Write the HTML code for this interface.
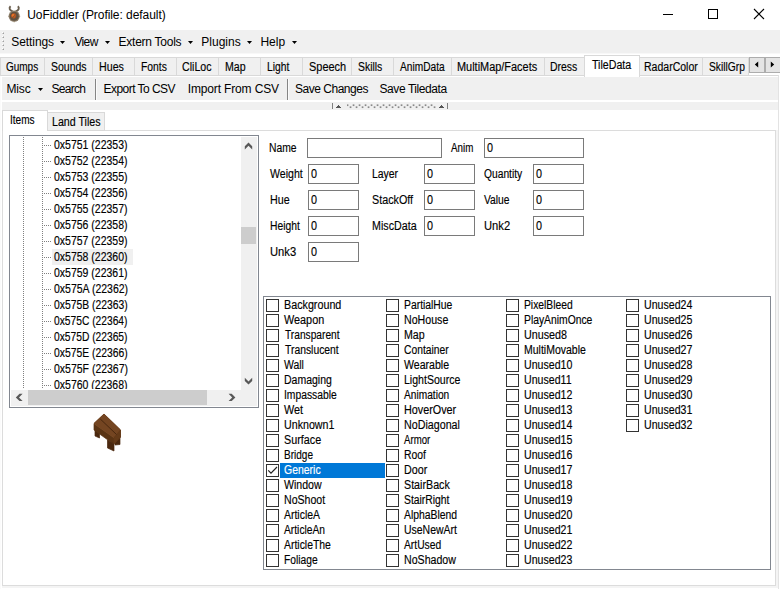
<!DOCTYPE html>
<html><head><meta charset="utf-8"><title>UoFiddler</title>
<style>
html,body{margin:0;padding:0;background:#fff;width:780px;height:589px;overflow:hidden;}
body{font-family:"Liberation Sans",sans-serif;color:#000;}
#w{left:0;top:0;width:780px;height:589px;overflow:hidden;}
div,span,svg{position:absolute;}
span{white-space:nowrap;}
.ms{font-size:12px;transform-origin:0 50%;-webkit-text-stroke:0.15px currentColor;}
.seg{font-size:12px;}
.tabt{text-align:center;}
</style></head><body><div id="w">
<svg style="left:0;top:0" width="30" height="30" viewBox="0 0 30 30">
<path d="M10.6 6.3 C8.7 8.0 9.4 10.3 13.0 11.6 M17.8 6.3 C19.7 8.0 19.0 10.3 15.4 11.6" fill="none" stroke="#6a5f4f" stroke-width="1.9"/>
<circle cx="14.2" cy="16.2" r="5.6" fill="#8b7c68"/>
<circle cx="14.2" cy="16.2" r="4.5" fill="#5e5141"/>
<circle cx="13.7" cy="15.8" r="2.6" fill="#b8541e"/>
<circle cx="13.2" cy="15.4" r="1.4" fill="#ea7426"/>
<path d="M12.2 18.2 L15.2 14.4 M15.8 17.8 L16.6 15.2" stroke="#5e5141" stroke-width="0.7"/>
<path d="M14.2 21 L14.2 22.3" stroke="#9a8a70" stroke-width="1.1"/>
<path d="M8.4 16.3 H9.2 M19.3 16.3 H20.2" stroke="#a09078" stroke-width="0.9"/>
</svg>
<span class="seg" style="left:27.2px;top:6.0px;height:18px;line-height:18px;letter-spacing:-0.059px;">UoFiddler (Profile: default)</span>
<svg style="left:655px;top:0" width="125" height="30" viewBox="0 0 125 30"><path d="M8 14.5 H18" stroke="#000" stroke-width="1"/><rect x="53.5" y="9.5" width="9" height="9" fill="none" stroke="#000" stroke-width="1"/><path d="M99 9 L109 19 M109 9 L99 19" stroke="#000" stroke-width="1.1"/></svg>
<div style="left:0px;top:30px;width:780px;height:23px;background:#f0f0f0;"></div>
<div style="left:0px;top:53px;width:780px;height:1px;background:#f8f8f8;"></div>
<div style="left:2px;top:32px;width:1px;height:1px;background:#ffffff;"></div>
<div style="left:3px;top:32px;width:1px;height:1px;background:#cfcfcf;"></div>
<div style="left:2px;top:33px;width:1px;height:1px;background:#cfcfcf;"></div>
<div style="left:3px;top:33px;width:1px;height:1px;background:#a0a0a0;"></div>
<div style="left:2px;top:36px;width:1px;height:1px;background:#ffffff;"></div>
<div style="left:3px;top:36px;width:1px;height:1px;background:#cfcfcf;"></div>
<div style="left:2px;top:37px;width:1px;height:1px;background:#cfcfcf;"></div>
<div style="left:3px;top:37px;width:1px;height:1px;background:#a0a0a0;"></div>
<div style="left:2px;top:40px;width:1px;height:1px;background:#ffffff;"></div>
<div style="left:3px;top:40px;width:1px;height:1px;background:#cfcfcf;"></div>
<div style="left:2px;top:41px;width:1px;height:1px;background:#cfcfcf;"></div>
<div style="left:3px;top:41px;width:1px;height:1px;background:#a0a0a0;"></div>
<div style="left:2px;top:44px;width:1px;height:1px;background:#ffffff;"></div>
<div style="left:3px;top:44px;width:1px;height:1px;background:#cfcfcf;"></div>
<div style="left:2px;top:45px;width:1px;height:1px;background:#cfcfcf;"></div>
<div style="left:3px;top:45px;width:1px;height:1px;background:#a0a0a0;"></div>
<div style="left:2px;top:48px;width:1px;height:1px;background:#ffffff;"></div>
<div style="left:3px;top:48px;width:1px;height:1px;background:#cfcfcf;"></div>
<div style="left:2px;top:49px;width:1px;height:1px;background:#cfcfcf;"></div>
<div style="left:3px;top:49px;width:1px;height:1px;background:#a0a0a0;"></div>
<span class="seg" style="left:11.3px;top:33.0px;height:18px;line-height:18px;letter-spacing:-0.086px;">Settings</span>
<svg style="left:60px;top:41px" width="6" height="4" viewBox="0 0 6 4"><path d="M0 0 H5 L2.5 3 Z" fill="#000"/></svg>
<span class="seg" style="left:74.5px;top:33.0px;height:18px;line-height:18px;letter-spacing:-0.667px;">View</span>
<svg style="left:105px;top:41px" width="6" height="4" viewBox="0 0 6 4"><path d="M0 0 H5 L2.5 3 Z" fill="#000"/></svg>
<span class="seg" style="left:118.6px;top:33.0px;height:18px;line-height:18px;letter-spacing:-0.255px;">Extern Tools</span>
<svg style="left:188px;top:41px" width="6" height="4" viewBox="0 0 6 4"><path d="M0 0 H5 L2.5 3 Z" fill="#000"/></svg>
<span class="seg" style="left:201.3px;top:33.0px;height:18px;line-height:18px;letter-spacing:0.0px;">Plugins</span>
<svg style="left:247px;top:41px" width="6" height="4" viewBox="0 0 6 4"><path d="M0 0 H5 L2.5 3 Z" fill="#000"/></svg>
<span class="seg" style="left:260.4px;top:33.0px;height:18px;line-height:18px;letter-spacing:0.0px;">Help</span>
<svg style="left:292px;top:41px" width="6" height="4" viewBox="0 0 6 4"><path d="M0 0 H5 L2.5 3 Z" fill="#000"/></svg>
<div style="left:0px;top:75px;width:779px;height:514px;background:#fff;border:1px solid #e3e3e3;box-sizing:border-box;border-top-color:#d9d9d9;border-left-color:#fbfbfb;border-bottom:none;"></div>
<div style="left:0px;top:57px;width:45px;height:19px;background:#f0f0f0;border:1px solid #d9d9d9;box-sizing:border-box;"></div>
<span class="ms" style="left:5.6px;top:58.650000000000006px;height:16px;line-height:16px;transform:scaleX(0.8308);">Gumps</span>
<div style="left:44px;top:57px;width:49px;height:19px;background:#f0f0f0;border:1px solid #d9d9d9;box-sizing:border-box;"></div>
<span class="ms" style="left:50.52px;top:58.650000000000006px;height:16px;line-height:16px;transform:scaleX(0.875);">Sounds</span>
<div style="left:92px;top:57px;width:43px;height:19px;background:#f0f0f0;border:1px solid #d9d9d9;box-sizing:border-box;"></div>
<span class="ms" style="left:98.51px;top:58.650000000000006px;height:16px;line-height:16px;transform:scaleX(0.8889);">Hues</span>
<div style="left:134px;top:57px;width:43px;height:19px;background:#f0f0f0;border:1px solid #d9d9d9;box-sizing:border-box;"></div>
<span class="ms" style="left:140.54px;top:58.650000000000006px;height:16px;line-height:16px;transform:scaleX(0.8621);">Fonts</span>
<div style="left:176px;top:57px;width:43px;height:19px;background:#f0f0f0;border:1px solid #d9d9d9;box-sizing:border-box;"></div>
<span class="ms" style="left:182.4px;top:58.650000000000006px;height:16px;line-height:16px;transform:scaleX(0.8848);">CliLoc</span>
<div style="left:218px;top:57px;width:43px;height:19px;background:#f0f0f0;border:1px solid #d9d9d9;box-sizing:border-box;"></div>
<span class="ms" style="left:224.72px;top:58.650000000000006px;height:16px;line-height:16px;transform:scaleX(0.8818);">Map</span>
<div style="left:260px;top:57px;width:43px;height:19px;background:#f0f0f0;border:1px solid #d9d9d9;box-sizing:border-box;"></div>
<span class="ms" style="left:266.74px;top:58.650000000000006px;height:16px;line-height:16px;transform:scaleX(0.856);">Light</span>
<div style="left:302px;top:57px;width:50px;height:19px;background:#f0f0f0;border:1px solid #d9d9d9;box-sizing:border-box;"></div>
<span class="ms" style="left:309.09px;top:58.650000000000006px;height:16px;line-height:16px;transform:scaleX(0.9128);">Speech</span>
<div style="left:351px;top:57px;width:43px;height:19px;background:#f0f0f0;border:1px solid #d9d9d9;box-sizing:border-box;"></div>
<span class="ms" style="left:357.63px;top:58.650000000000006px;height:16px;line-height:16px;transform:scaleX(0.8667);">Skills</span>
<div style="left:393px;top:57px;width:59px;height:19px;background:#f0f0f0;border:1px solid #d9d9d9;box-sizing:border-box;"></div>
<span class="ms" style="left:400.0px;top:58.650000000000006px;height:16px;line-height:16px;transform:scaleX(0.8491);">AnimData</span>
<div style="left:451px;top:57px;width:94px;height:19px;background:#f0f0f0;border:1px solid #d9d9d9;box-sizing:border-box;"></div>
<span class="ms" style="left:457.49px;top:58.650000000000006px;height:16px;line-height:16px;transform:scaleX(0.9103);">MultiMap/Facets</span>
<div style="left:544px;top:57px;width:41px;height:19px;background:#f0f0f0;border:1px solid #d9d9d9;box-sizing:border-box;"></div>
<span class="ms" style="left:549.53px;top:58.650000000000006px;height:16px;line-height:16px;transform:scaleX(0.8667);">Dress</span>
<div style="left:639px;top:57px;width:64px;height:19px;background:#f0f0f0;border:1px solid #d9d9d9;box-sizing:border-box;"></div>
<span class="ms" style="left:643.52px;top:58.650000000000006px;height:16px;line-height:16px;transform:scaleX(0.8767);">RadarColor</span>
<div style="left:702px;top:57px;width:47px;height:19px;background:#f0f0f0;border:1px solid #d9d9d9;box-sizing:border-box;"></div>
<span class="ms" style="left:708.65px;top:58.650000000000006px;height:16px;line-height:16px;transform:scaleX(0.8537);">SkillGrp</span>
<div style="left:584px;top:55px;width:56px;height:22px;background:#fff;border:1px solid #d9d9d9;box-sizing:border-box;border-bottom:none;"></div>
<span class="ms" style="left:592.4px;top:56.650000000000006px;height:16px;line-height:16px;transform:scaleX(0.8864);">TileData</span>
<div style="left:749px;top:57px;width:16px;height:16px;background:#e4e4e4;border:1px solid #adadad;box-sizing:border-box;"></div>
<div style="left:765px;top:57px;width:15px;height:16px;background:#e4e4e4;border:1px solid #adadad;box-sizing:border-box;border-right:none;"></div>
<div style="left:764px;top:57px;width:2px;height:16px;background:#adadad;"></div>
<svg style="left:750px;top:58px" width="30" height="14" viewBox="750 58 30 14"><path d="M758.2 61.5 V67.5 L754.8 64.5 Z M770.8 61.5 V67.5 L774.2 64.5 Z" fill="#000"/></svg>
<div style="left:2px;top:77px;width:776px;height:23px;background:#f0f0f0;"></div>
<span class="seg" style="left:6.5px;top:79.5px;height:18px;line-height:18px;letter-spacing:-0.167px;">Misc</span>
<span class="seg" style="left:51.5px;top:79.5px;height:18px;line-height:18px;letter-spacing:-0.7px;">Search</span>
<span class="seg" style="left:103.5px;top:79.5px;height:18px;line-height:18px;letter-spacing:-0.542px;">Export To CSV</span>
<span class="seg" style="left:187.7px;top:79.5px;height:18px;line-height:18px;letter-spacing:-0.143px;">Import From CSV</span>
<span class="seg" style="left:295.0px;top:79.5px;height:18px;line-height:18px;letter-spacing:-0.482px;">Save Changes</span>
<span class="seg" style="left:379.5px;top:79.5px;height:18px;line-height:18px;letter-spacing:-0.417px;">Save Tiledata</span>
<svg style="left:38px;top:88px" width="6" height="4" viewBox="0 0 6 4"><path d="M0 0 H5 L2.5 3 Z" fill="#000"/></svg>
<div style="left:95px;top:79px;width:1px;height:21px;background:#858585;"></div>
<div style="left:96px;top:79px;width:1px;height:21px;background:#fbfbfb;"></div>
<div style="left:287px;top:79px;width:1px;height:21px;background:#858585;"></div>
<div style="left:288px;top:79px;width:1px;height:21px;background:#fbfbfb;"></div>
<div style="left:2px;top:102px;width:776px;height:8px;background:#f0f0f0;"></div>
<div style="left:332px;top:103px;width:1px;height:6px;background:#7e7e7e;"></div>
<div style="left:447px;top:103px;width:1px;height:6px;background:#7e7e7e;"></div>
<div style="left:338px;top:105px;width:1px;height:1px;background:#555;"></div>
<div style="left:337px;top:106px;width:3px;height:1px;background:#555;"></div>
<div style="left:336px;top:107px;width:5px;height:1px;background:#555;"></div>
<div style="left:441px;top:105px;width:1px;height:1px;background:#555;"></div>
<div style="left:440px;top:106px;width:3px;height:1px;background:#555;"></div>
<div style="left:439px;top:107px;width:5px;height:1px;background:#555;"></div>
<svg style="left:347px;top:104px" width="92" height="6" viewBox="0 0 92 6" fill="#8a8a8a"><rect x="-0.3" y="0.35" width="1.7" height="1.7"/><rect x="2.7" y="2.35" width="1.7" height="1.7"/><rect x="5.7" y="0.35" width="1.7" height="1.7"/><rect x="8.7" y="2.35" width="1.7" height="1.7"/><rect x="11.7" y="0.35" width="1.7" height="1.7"/><rect x="14.7" y="2.35" width="1.7" height="1.7"/><rect x="17.7" y="0.35" width="1.7" height="1.7"/><rect x="20.7" y="2.35" width="1.7" height="1.7"/><rect x="23.7" y="0.35" width="1.7" height="1.7"/><rect x="26.7" y="2.35" width="1.7" height="1.7"/><rect x="29.7" y="0.35" width="1.7" height="1.7"/><rect x="32.7" y="2.35" width="1.7" height="1.7"/><rect x="35.7" y="0.35" width="1.7" height="1.7"/><rect x="38.7" y="2.35" width="1.7" height="1.7"/><rect x="41.7" y="0.35" width="1.7" height="1.7"/><rect x="44.7" y="2.35" width="1.7" height="1.7"/><rect x="47.7" y="0.35" width="1.7" height="1.7"/><rect x="50.7" y="2.35" width="1.7" height="1.7"/><rect x="53.7" y="0.35" width="1.7" height="1.7"/><rect x="56.7" y="2.35" width="1.7" height="1.7"/><rect x="59.7" y="0.35" width="1.7" height="1.7"/><rect x="62.7" y="2.35" width="1.7" height="1.7"/><rect x="65.7" y="0.35" width="1.7" height="1.7"/><rect x="68.7" y="2.35" width="1.7" height="1.7"/><rect x="71.7" y="0.35" width="1.7" height="1.7"/><rect x="74.7" y="2.35" width="1.7" height="1.7"/><rect x="77.7" y="0.35" width="1.7" height="1.7"/><rect x="80.7" y="2.35" width="1.7" height="1.7"/><rect x="83.7" y="0.35" width="1.7" height="1.7"/><rect x="86.7" y="2.35" width="1.7" height="1.7"/></svg>
<div style="left:2px;top:130px;width:776px;height:458px;background:#f4f4f4;"></div>
<div style="left:2px;top:130px;width:774px;height:456px;background:#fff;border:1px solid #dcdcdc;box-sizing:border-box;"></div>
<div style="left:47px;top:112px;width:58px;height:19px;background:#f0f0f0;border:1px solid #d9d9d9;box-sizing:border-box;"></div>
<span class="ms" style="left:51.61px;top:114.35000000000001px;height:16px;line-height:16px;transform:scaleX(0.8889);">Land Tiles</span>
<div style="left:2px;top:110px;width:46px;height:21px;background:#fff;border:1px solid #d9d9d9;box-sizing:border-box;border-bottom:none;"></div>
<span class="ms" style="left:10.16px;top:112.35000000000001px;height:16px;line-height:16px;transform:scaleX(0.8393);">Items</span>
<div style="left:9px;top:135px;width:250px;height:273px;background:#fff;border:1px solid #828790;box-sizing:border-box;"></div>
<div style="left:11px;top:137px;width:230px;height:252px;overflow:hidden">
<div style="left:12px;top:0;width:1px;height:253px;background:repeating-linear-gradient(to bottom,#808080 0 1px,transparent 1px 2px)"></div>
<div style="left:31px;top:0;width:1px;height:253px;background:repeating-linear-gradient(to bottom,#808080 0 1px,transparent 1px 2px)"></div>
<div style="left:33px;top:8px;width:8px;height:1px;background:repeating-linear-gradient(to right,#808080 0 1px,transparent 1px 2px)"></div>
<span class="ms" style="left:43.4px;top:-0.35px;height:16px;line-height:16px;transform:scaleX(0.8738)">0x5751 (22353)</span>
<div style="left:33px;top:24px;width:8px;height:1px;background:repeating-linear-gradient(to right,#808080 0 1px,transparent 1px 2px)"></div>
<span class="ms" style="left:43.4px;top:15.65px;height:16px;line-height:16px;transform:scaleX(0.8738)">0x5752 (22354)</span>
<div style="left:33px;top:40px;width:8px;height:1px;background:repeating-linear-gradient(to right,#808080 0 1px,transparent 1px 2px)"></div>
<span class="ms" style="left:43.4px;top:31.65px;height:16px;line-height:16px;transform:scaleX(0.8738)">0x5753 (22355)</span>
<div style="left:33px;top:56px;width:8px;height:1px;background:repeating-linear-gradient(to right,#808080 0 1px,transparent 1px 2px)"></div>
<span class="ms" style="left:43.4px;top:47.65px;height:16px;line-height:16px;transform:scaleX(0.8738)">0x5754 (22356)</span>
<div style="left:33px;top:72px;width:8px;height:1px;background:repeating-linear-gradient(to right,#808080 0 1px,transparent 1px 2px)"></div>
<span class="ms" style="left:43.4px;top:63.65px;height:16px;line-height:16px;transform:scaleX(0.8738)">0x5755 (22357)</span>
<div style="left:33px;top:88px;width:8px;height:1px;background:repeating-linear-gradient(to right,#808080 0 1px,transparent 1px 2px)"></div>
<span class="ms" style="left:43.4px;top:79.65px;height:16px;line-height:16px;transform:scaleX(0.8738)">0x5756 (22358)</span>
<div style="left:33px;top:104px;width:8px;height:1px;background:repeating-linear-gradient(to right,#808080 0 1px,transparent 1px 2px)"></div>
<span class="ms" style="left:43.4px;top:95.65px;height:16px;line-height:16px;transform:scaleX(0.8738)">0x5757 (22359)</span>
<div style="left:33px;top:120px;width:8px;height:1px;background:repeating-linear-gradient(to right,#808080 0 1px,transparent 1px 2px)"></div>
<div style="left:41px;top:112px;width:81px;height:16px;background:#f0f0f0"></div>
<span class="ms" style="left:43.4px;top:111.65px;height:16px;line-height:16px;transform:scaleX(0.8738)">0x5758 (22360)</span>
<div style="left:33px;top:136px;width:8px;height:1px;background:repeating-linear-gradient(to right,#808080 0 1px,transparent 1px 2px)"></div>
<span class="ms" style="left:43.4px;top:127.65px;height:16px;line-height:16px;transform:scaleX(0.8738)">0x5759 (22361)</span>
<div style="left:33px;top:152px;width:8px;height:1px;background:repeating-linear-gradient(to right,#808080 0 1px,transparent 1px 2px)"></div>
<span class="ms" style="left:43.4px;top:143.65px;height:16px;line-height:16px;transform:scaleX(0.8738)">0x575A (22362)</span>
<div style="left:33px;top:168px;width:8px;height:1px;background:repeating-linear-gradient(to right,#808080 0 1px,transparent 1px 2px)"></div>
<span class="ms" style="left:43.4px;top:159.65px;height:16px;line-height:16px;transform:scaleX(0.8635)">0x575B (22363)</span>
<div style="left:33px;top:184px;width:8px;height:1px;background:repeating-linear-gradient(to right,#808080 0 1px,transparent 1px 2px)"></div>
<span class="ms" style="left:43.4px;top:175.65px;height:16px;line-height:16px;transform:scaleX(0.8535)">0x575C (22364)</span>
<div style="left:33px;top:200px;width:8px;height:1px;background:repeating-linear-gradient(to right,#808080 0 1px,transparent 1px 2px)"></div>
<span class="ms" style="left:43.4px;top:191.65px;height:16px;line-height:16px;transform:scaleX(0.8535)">0x575D (22365)</span>
<div style="left:33px;top:216px;width:8px;height:1px;background:repeating-linear-gradient(to right,#808080 0 1px,transparent 1px 2px)"></div>
<span class="ms" style="left:43.4px;top:207.65px;height:16px;line-height:16px;transform:scaleX(0.8635)">0x575E (22366)</span>
<div style="left:33px;top:232px;width:8px;height:1px;background:repeating-linear-gradient(to right,#808080 0 1px,transparent 1px 2px)"></div>
<span class="ms" style="left:43.4px;top:223.65px;height:16px;line-height:16px;transform:scaleX(0.8738)">0x575F (22367)</span>
<div style="left:33px;top:248px;width:8px;height:1px;background:repeating-linear-gradient(to right,#808080 0 1px,transparent 1px 2px)"></div>
<span class="ms" style="left:43.4px;top:239.65px;height:16px;line-height:16px;transform:scaleX(0.8738)">0x5760 (22368)</span>
</div>
<div style="left:241px;top:137px;width:16px;height:269px;background:#f0f0f0;"></div>
<div style="left:241px;top:227px;width:15px;height:17px;background:#cdcdcd;"></div>
<div style="left:11px;top:390px;width:230px;height:16px;background:#f0f0f0;"></div>
<div style="left:28px;top:390px;width:179px;height:15px;background:#cdcdcd;"></div>
<svg style="left:0;top:130px" width="270" height="290" viewBox="0 130 270 290" fill="#585858"><polygon points="248.5,142.6 252.2,146.3 252.2,149.4 248.5,145.8 244.8,149.4 244.8,146.3"/><polygon points="244.8,377.8 248.5,381.4 252.2,377.8 252.2,380.9 248.5,384.6 244.8,380.9"/><polygon points="15.8,397.4 19.5,393.7 22.6,393.7 19,397.4 22.6,401.1 19.5,401.1"/><polygon points="235.4,397.4 231.7,393.7 228.6,393.7 232.2,397.4 228.6,401.1 231.7,401.1"/></svg>
<svg style="left:90px;top:410px" width="36" height="44" viewBox="90 410 36 44" stroke-width="0.7" stroke-linejoin="round">
<polygon points="95,428 99.5,431 99.5,438 95,436" fill="#4a280f" stroke="#4a280f"/>
<polygon points="115,440 120,436 120,444.5 115,445" fill="#4a280f" stroke="#4a280f"/>
<polygon points="94,423.5 104,414 120.5,430 120.5,437 113.5,444 94,430" fill="#5a3414" stroke="#5a3414"/>
<polygon points="104,414 120.5,430 114,437.5 94,423.5" fill="#744521" stroke="#744521"/>
<polygon points="114,437.5 120.5,430 120.5,437 114,444" fill="#643a18" stroke="#643a18"/>
<polygon points="107.5,440 114,444 114,451 107.5,448" fill="#4a280f" stroke="#4a280f"/>
<path d="M100.3 419 L116.5 434.5" stroke="#43240c" stroke-width="0.9"/>
<path d="M94.5 424 L113.8 437.6" stroke="#80502a" stroke-width="0.6"/>
</svg>
<span class="ms" style="left:268.74px;top:139.65px;height:16px;line-height:16px;transform:scaleX(0.8613);">Name</span>
<span class="ms" style="left:270.4px;top:165.65px;height:16px;line-height:16px;transform:scaleX(0.8811);">Weight</span>
<span class="ms" style="left:269.61px;top:191.65px;height:16px;line-height:16px;transform:scaleX(0.8905);">Hue</span>
<span class="ms" style="left:269.64px;top:217.65px;height:16px;line-height:16px;transform:scaleX(0.8588);">Height</span>
<span class="ms" style="left:269.57px;top:243.65px;height:16px;line-height:16px;transform:scaleX(0.9333);">Unk3</span>
<span class="ms" style="left:371.83px;top:165.65px;height:16px;line-height:16px;transform:scaleX(0.869);">Layer</span>
<span class="ms" style="left:371.8px;top:191.65px;height:16px;line-height:16px;transform:scaleX(0.8978);">StackOff</span>
<span class="ms" style="left:371.61px;top:217.65px;height:16px;line-height:16px;transform:scaleX(0.8918);">MiscData</span>
<span class="ms" style="left:451.0px;top:139.65px;height:16px;line-height:16px;transform:scaleX(0.8148);">Anim</span>
<span class="ms" style="left:483.7px;top:165.65px;height:16px;line-height:16px;transform:scaleX(0.8556);">Quantity</span>
<span class="ms" style="left:484.2px;top:191.65px;height:16px;line-height:16px;transform:scaleX(0.8567);">Value</span>
<span class="ms" style="left:483.77px;top:217.65px;height:16px;line-height:16px;transform:scaleX(0.9333);">Unk2</span>
<div style="left:307px;top:138px;width:135px;height:20px;background:#fff;border:1px solid #7a7a7a;box-sizing:border-box;"></div>
<div style="left:484px;top:138px;width:100px;height:20px;background:#fff;border:1px solid #7a7a7a;box-sizing:border-box;"></div>
<span class="ms" style="left:487.0px;top:139.65px;height:16px;line-height:16px;transform:scaleX(0.9);">0</span>
<div style="left:308px;top:164px;width:51px;height:20px;background:#fff;border:1px solid #7a7a7a;box-sizing:border-box;"></div>
<span class="ms" style="left:311.0px;top:165.65px;height:16px;line-height:16px;transform:scaleX(0.9);">0</span>
<div style="left:308px;top:190px;width:51px;height:20px;background:#fff;border:1px solid #7a7a7a;box-sizing:border-box;"></div>
<span class="ms" style="left:311.0px;top:191.65px;height:16px;line-height:16px;transform:scaleX(0.9);">0</span>
<div style="left:308px;top:216px;width:51px;height:20px;background:#fff;border:1px solid #7a7a7a;box-sizing:border-box;"></div>
<span class="ms" style="left:311.0px;top:217.65px;height:16px;line-height:16px;transform:scaleX(0.9);">0</span>
<div style="left:308px;top:242px;width:51px;height:20px;background:#fff;border:1px solid #7a7a7a;box-sizing:border-box;"></div>
<span class="ms" style="left:311.0px;top:243.65px;height:16px;line-height:16px;transform:scaleX(0.9);">0</span>
<div style="left:424px;top:164px;width:51px;height:20px;background:#fff;border:1px solid #7a7a7a;box-sizing:border-box;"></div>
<span class="ms" style="left:427.0px;top:165.65px;height:16px;line-height:16px;transform:scaleX(0.9);">0</span>
<div style="left:533px;top:164px;width:51px;height:20px;background:#fff;border:1px solid #7a7a7a;box-sizing:border-box;"></div>
<span class="ms" style="left:536.0px;top:165.65px;height:16px;line-height:16px;transform:scaleX(0.9);">0</span>
<div style="left:424px;top:190px;width:51px;height:20px;background:#fff;border:1px solid #7a7a7a;box-sizing:border-box;"></div>
<span class="ms" style="left:427.0px;top:191.65px;height:16px;line-height:16px;transform:scaleX(0.9);">0</span>
<div style="left:533px;top:190px;width:51px;height:20px;background:#fff;border:1px solid #7a7a7a;box-sizing:border-box;"></div>
<span class="ms" style="left:536.0px;top:191.65px;height:16px;line-height:16px;transform:scaleX(0.9);">0</span>
<div style="left:424px;top:216px;width:51px;height:20px;background:#fff;border:1px solid #7a7a7a;box-sizing:border-box;"></div>
<span class="ms" style="left:427.0px;top:217.65px;height:16px;line-height:16px;transform:scaleX(0.9);">0</span>
<div style="left:533px;top:216px;width:51px;height:20px;background:#fff;border:1px solid #7a7a7a;box-sizing:border-box;"></div>
<span class="ms" style="left:536.0px;top:217.65px;height:16px;line-height:16px;transform:scaleX(0.9);">0</span>
<div style="left:263px;top:296px;width:508px;height:274px;background:#fff;border:1px solid #828790;box-sizing:border-box;"></div>
<div style="left:266px;top:299px;width:13px;height:13px;background:#fff;border:1px solid #333333;box-sizing:border-box;"></div>
<span class="ms" style="left:283.7px;top:297.65px;height:15px;line-height:15px;transform:scaleX(0.8952);">Background</span>
<div style="left:266px;top:314px;width:13px;height:13px;background:#fff;border:1px solid #333333;box-sizing:border-box;"></div>
<span class="ms" style="left:284.3px;top:312.65px;height:15px;line-height:15px;transform:scaleX(0.9045);">Weapon</span>
<div style="left:266px;top:329px;width:13px;height:13px;background:#fff;border:1px solid #333333;box-sizing:border-box;"></div>
<span class="ms" style="left:284.6px;top:327.65px;height:15px;line-height:15px;transform:scaleX(0.8492);">Transparent</span>
<div style="left:266px;top:344px;width:13px;height:13px;background:#fff;border:1px solid #333333;box-sizing:border-box;"></div>
<span class="ms" style="left:284.6px;top:342.65px;height:15px;line-height:15px;transform:scaleX(0.8635);">Translucent</span>
<div style="left:266px;top:359px;width:13px;height:13px;background:#fff;border:1px solid #333333;box-sizing:border-box;"></div>
<span class="ms" style="left:284.1px;top:357.65px;height:15px;line-height:15px;transform:scaleX(0.8696);">Wall</span>
<div style="left:266px;top:374px;width:13px;height:13px;background:#fff;border:1px solid #333333;box-sizing:border-box;"></div>
<span class="ms" style="left:283.72px;top:372.65px;height:15px;line-height:15px;transform:scaleX(0.8755);">Damaging</span>
<div style="left:266px;top:389px;width:13px;height:13px;background:#fff;border:1px solid #333333;box-sizing:border-box;"></div>
<span class="ms" style="left:283.74px;top:387.65px;height:15px;line-height:15px;transform:scaleX(0.86);">Impassable</span>
<div style="left:266px;top:404px;width:13px;height:13px;background:#fff;border:1px solid #333333;box-sizing:border-box;"></div>
<span class="ms" style="left:284.1px;top:402.65px;height:15px;line-height:15px;transform:scaleX(0.9048);">Wet</span>
<div style="left:266px;top:419px;width:13px;height:13px;background:#fff;border:1px solid #333333;box-sizing:border-box;"></div>
<span class="ms" style="left:283.71px;top:417.65px;height:15px;line-height:15px;transform:scaleX(0.8893);">Unknown1</span>
<div style="left:266px;top:434px;width:13px;height:13px;background:#fff;border:1px solid #333333;box-sizing:border-box;"></div>
<span class="ms" style="left:283.9px;top:432.65px;height:15px;line-height:15px;transform:scaleX(0.8975);">Surface</span>
<div style="left:266px;top:449px;width:13px;height:13px;background:#fff;border:1px solid #333333;box-sizing:border-box;"></div>
<span class="ms" style="left:283.76px;top:447.65px;height:15px;line-height:15px;transform:scaleX(0.8353);">Bridge</span>
<div style="left:280px;top:463px;width:105px;height:15px;background:#0078d7;"></div>
<div style="left:266px;top:464px;width:13px;height:13px;background:#fff;border:1px solid #333333;box-sizing:border-box;"></div>
<svg style="left:266px;top:464px" width="13" height="13" viewBox="0 0 13 13"><path d="M2.2 6.3 L5 9.2 L11 3" fill="none" stroke="#222" stroke-width="1.2"/></svg>
<span class="ms" style="left:284.1px;top:462.65px;height:15px;line-height:15px;color:#fff;transform:scaleX(0.8714);">Generic</span>
<div style="left:266px;top:479px;width:13px;height:13px;background:#fff;border:1px solid #333333;box-sizing:border-box;"></div>
<span class="ms" style="left:284.1px;top:477.65px;height:15px;line-height:15px;transform:scaleX(0.8814);">Window</span>
<div style="left:266px;top:494px;width:13px;height:13px;background:#fff;border:1px solid #333333;box-sizing:border-box;"></div>
<span class="ms" style="left:283.72px;top:492.65px;height:15px;line-height:15px;transform:scaleX(0.8804);">NoShoot</span>
<div style="left:266px;top:509px;width:13px;height:13px;background:#fff;border:1px solid #333333;box-sizing:border-box;"></div>
<span class="ms" style="left:284.1px;top:507.65px;height:15px;line-height:15px;transform:scaleX(0.8707);">ArticleA</span>
<div style="left:266px;top:524px;width:13px;height:13px;background:#fff;border:1px solid #333333;box-sizing:border-box;"></div>
<span class="ms" style="left:284.1px;top:522.65px;height:15px;line-height:15px;transform:scaleX(0.8542);">ArticleAn</span>
<div style="left:266px;top:539px;width:13px;height:13px;background:#fff;border:1px solid #333333;box-sizing:border-box;"></div>
<span class="ms" style="left:284.1px;top:537.65px;height:15px;line-height:15px;transform:scaleX(0.8685);">ArticleThe</span>
<div style="left:266px;top:554px;width:13px;height:13px;background:#fff;border:1px solid #333333;box-sizing:border-box;"></div>
<span class="ms" style="left:283.74px;top:552.65px;height:15px;line-height:15px;transform:scaleX(0.8553);">Foliage</span>
<div style="left:386px;top:299px;width:13px;height:13px;background:#fff;border:1px solid #333333;box-sizing:border-box;"></div>
<span class="ms" style="left:403.74px;top:297.65px;height:15px;line-height:15px;transform:scaleX(0.8636);">PartialHue</span>
<div style="left:386px;top:314px;width:13px;height:13px;background:#fff;border:1px solid #333333;box-sizing:border-box;"></div>
<span class="ms" style="left:403.71px;top:312.65px;height:15px;line-height:15px;transform:scaleX(0.8857);">NoHouse</span>
<div style="left:386px;top:329px;width:13px;height:13px;background:#fff;border:1px solid #333333;box-sizing:border-box;"></div>
<span class="ms" style="left:403.71px;top:327.65px;height:15px;line-height:15px;transform:scaleX(0.8864);">Map</span>
<div style="left:386px;top:344px;width:13px;height:13px;background:#fff;border:1px solid #333333;box-sizing:border-box;"></div>
<span class="ms" style="left:404.1px;top:342.65px;height:15px;line-height:15px;transform:scaleX(0.8577);">Container</span>
<div style="left:386px;top:359px;width:13px;height:13px;background:#fff;border:1px solid #333333;box-sizing:border-box;"></div>
<span class="ms" style="left:404.1px;top:357.65px;height:15px;line-height:15px;transform:scaleX(0.8804);">Wearable</span>
<div style="left:386px;top:374px;width:13px;height:13px;background:#fff;border:1px solid #333333;box-sizing:border-box;"></div>
<span class="ms" style="left:403.72px;top:372.65px;height:15px;line-height:15px;transform:scaleX(0.8794);">LightSource</span>
<div style="left:386px;top:389px;width:13px;height:13px;background:#fff;border:1px solid #333333;box-sizing:border-box;"></div>
<span class="ms" style="left:404.1px;top:387.65px;height:15px;line-height:15px;transform:scaleX(0.8472);">Animation</span>
<div style="left:386px;top:404px;width:13px;height:13px;background:#fff;border:1px solid #333333;box-sizing:border-box;"></div>
<span class="ms" style="left:403.7px;top:402.65px;height:15px;line-height:15px;transform:scaleX(0.9);">HoverOver</span>
<div style="left:386px;top:419px;width:13px;height:13px;background:#fff;border:1px solid #333333;box-sizing:border-box;"></div>
<span class="ms" style="left:403.71px;top:417.65px;height:15px;line-height:15px;transform:scaleX(0.8918);">NoDiagonal</span>
<div style="left:386px;top:434px;width:13px;height:13px;background:#fff;border:1px solid #333333;box-sizing:border-box;"></div>
<span class="ms" style="left:404.1px;top:432.65px;height:15px;line-height:15px;transform:scaleX(0.803);">Armor</span>
<div style="left:386px;top:449px;width:13px;height:13px;background:#fff;border:1px solid #333333;box-sizing:border-box;"></div>
<span class="ms" style="left:403.74px;top:447.65px;height:15px;line-height:15px;transform:scaleX(0.864);">Roof</span>
<div style="left:386px;top:464px;width:13px;height:13px;background:#fff;border:1px solid #333333;box-sizing:border-box;"></div>
<span class="ms" style="left:403.71px;top:462.65px;height:15px;line-height:15px;transform:scaleX(0.892);">Door</span>
<div style="left:386px;top:479px;width:13px;height:13px;background:#fff;border:1px solid #333333;box-sizing:border-box;"></div>
<span class="ms" style="left:403.71px;top:477.65px;height:15px;line-height:15px;transform:scaleX(0.892);">StairBack</span>
<div style="left:386px;top:494px;width:13px;height:13px;background:#fff;border:1px solid #333333;box-sizing:border-box;"></div>
<span class="ms" style="left:403.74px;top:492.65px;height:15px;line-height:15px;transform:scaleX(0.8635);">StairRight</span>
<div style="left:386px;top:509px;width:13px;height:13px;background:#fff;border:1px solid #333333;box-sizing:border-box;"></div>
<span class="ms" style="left:404.1px;top:507.65px;height:15px;line-height:15px;transform:scaleX(0.8656);">AlphaBlend</span>
<div style="left:386px;top:524px;width:13px;height:13px;background:#fff;border:1px solid #333333;box-sizing:border-box;"></div>
<span class="ms" style="left:403.73px;top:522.65px;height:15px;line-height:15px;transform:scaleX(0.8717);">UseNewArt</span>
<div style="left:386px;top:539px;width:13px;height:13px;background:#fff;border:1px solid #333333;box-sizing:border-box;"></div>
<span class="ms" style="left:404.1px;top:537.65px;height:15px;line-height:15px;transform:scaleX(0.8581);">ArtUsed</span>
<div style="left:386px;top:554px;width:13px;height:13px;background:#fff;border:1px solid #333333;box-sizing:border-box;"></div>
<span class="ms" style="left:403.72px;top:552.65px;height:15px;line-height:15px;transform:scaleX(0.8845);">NoShadow</span>
<div style="left:506px;top:299px;width:13px;height:13px;background:#fff;border:1px solid #333333;box-sizing:border-box;"></div>
<span class="ms" style="left:523.74px;top:297.65px;height:15px;line-height:15px;transform:scaleX(0.8582);">PixelBleed</span>
<div style="left:506px;top:314px;width:13px;height:13px;background:#fff;border:1px solid #333333;box-sizing:border-box;"></div>
<span class="ms" style="left:523.74px;top:312.65px;height:15px;line-height:15px;transform:scaleX(0.8615);">PlayAnimOnce</span>
<div style="left:506px;top:329px;width:13px;height:13px;background:#fff;border:1px solid #333333;box-sizing:border-box;"></div>
<span class="ms" style="left:523.7px;top:327.65px;height:15px;line-height:15px;transform:scaleX(0.8957);">Unused8</span>
<div style="left:506px;top:344px;width:13px;height:13px;background:#fff;border:1px solid #333333;box-sizing:border-box;"></div>
<span class="ms" style="left:523.73px;top:342.65px;height:15px;line-height:15px;transform:scaleX(0.8743);">MultiMovable</span>
<div style="left:506px;top:359px;width:13px;height:13px;background:#fff;border:1px solid #333333;box-sizing:border-box;"></div>
<span class="ms" style="left:523.72px;top:357.65px;height:15px;line-height:15px;transform:scaleX(0.8833);">Unused10</span>
<div style="left:506px;top:374px;width:13px;height:13px;background:#fff;border:1px solid #333333;box-sizing:border-box;"></div>
<span class="ms" style="left:523.72px;top:372.65px;height:15px;line-height:15px;transform:scaleX(0.8833);">Unused11</span>
<div style="left:506px;top:389px;width:13px;height:13px;background:#fff;border:1px solid #333333;box-sizing:border-box;"></div>
<span class="ms" style="left:523.72px;top:387.65px;height:15px;line-height:15px;transform:scaleX(0.8833);">Unused12</span>
<div style="left:506px;top:404px;width:13px;height:13px;background:#fff;border:1px solid #333333;box-sizing:border-box;"></div>
<span class="ms" style="left:523.72px;top:402.65px;height:15px;line-height:15px;transform:scaleX(0.8833);">Unused13</span>
<div style="left:506px;top:419px;width:13px;height:13px;background:#fff;border:1px solid #333333;box-sizing:border-box;"></div>
<span class="ms" style="left:523.72px;top:417.65px;height:15px;line-height:15px;transform:scaleX(0.8833);">Unused14</span>
<div style="left:506px;top:434px;width:13px;height:13px;background:#fff;border:1px solid #333333;box-sizing:border-box;"></div>
<span class="ms" style="left:523.72px;top:432.65px;height:15px;line-height:15px;transform:scaleX(0.8833);">Unused15</span>
<div style="left:506px;top:449px;width:13px;height:13px;background:#fff;border:1px solid #333333;box-sizing:border-box;"></div>
<span class="ms" style="left:523.72px;top:447.65px;height:15px;line-height:15px;transform:scaleX(0.8833);">Unused16</span>
<div style="left:506px;top:464px;width:13px;height:13px;background:#fff;border:1px solid #333333;box-sizing:border-box;"></div>
<span class="ms" style="left:523.72px;top:462.65px;height:15px;line-height:15px;transform:scaleX(0.8833);">Unused17</span>
<div style="left:506px;top:479px;width:13px;height:13px;background:#fff;border:1px solid #333333;box-sizing:border-box;"></div>
<span class="ms" style="left:523.72px;top:477.65px;height:15px;line-height:15px;transform:scaleX(0.8833);">Unused18</span>
<div style="left:506px;top:494px;width:13px;height:13px;background:#fff;border:1px solid #333333;box-sizing:border-box;"></div>
<span class="ms" style="left:523.72px;top:492.65px;height:15px;line-height:15px;transform:scaleX(0.8833);">Unused19</span>
<div style="left:506px;top:509px;width:13px;height:13px;background:#fff;border:1px solid #333333;box-sizing:border-box;"></div>
<span class="ms" style="left:523.72px;top:507.65px;height:15px;line-height:15px;transform:scaleX(0.8833);">Unused20</span>
<div style="left:506px;top:524px;width:13px;height:13px;background:#fff;border:1px solid #333333;box-sizing:border-box;"></div>
<span class="ms" style="left:523.72px;top:522.65px;height:15px;line-height:15px;transform:scaleX(0.8833);">Unused21</span>
<div style="left:506px;top:539px;width:13px;height:13px;background:#fff;border:1px solid #333333;box-sizing:border-box;"></div>
<span class="ms" style="left:523.72px;top:537.65px;height:15px;line-height:15px;transform:scaleX(0.8833);">Unused22</span>
<div style="left:506px;top:554px;width:13px;height:13px;background:#fff;border:1px solid #333333;box-sizing:border-box;"></div>
<span class="ms" style="left:523.72px;top:552.65px;height:15px;line-height:15px;transform:scaleX(0.8833);">Unused23</span>
<div style="left:626px;top:299px;width:13px;height:13px;background:#fff;border:1px solid #333333;box-sizing:border-box;"></div>
<span class="ms" style="left:643.72px;top:297.65px;height:15px;line-height:15px;transform:scaleX(0.8833);">Unused24</span>
<div style="left:626px;top:314px;width:13px;height:13px;background:#fff;border:1px solid #333333;box-sizing:border-box;"></div>
<span class="ms" style="left:643.72px;top:312.65px;height:15px;line-height:15px;transform:scaleX(0.8833);">Unused25</span>
<div style="left:626px;top:329px;width:13px;height:13px;background:#fff;border:1px solid #333333;box-sizing:border-box;"></div>
<span class="ms" style="left:643.72px;top:327.65px;height:15px;line-height:15px;transform:scaleX(0.8833);">Unused26</span>
<div style="left:626px;top:344px;width:13px;height:13px;background:#fff;border:1px solid #333333;box-sizing:border-box;"></div>
<span class="ms" style="left:643.72px;top:342.65px;height:15px;line-height:15px;transform:scaleX(0.8833);">Unused27</span>
<div style="left:626px;top:359px;width:13px;height:13px;background:#fff;border:1px solid #333333;box-sizing:border-box;"></div>
<span class="ms" style="left:643.72px;top:357.65px;height:15px;line-height:15px;transform:scaleX(0.8833);">Unused28</span>
<div style="left:626px;top:374px;width:13px;height:13px;background:#fff;border:1px solid #333333;box-sizing:border-box;"></div>
<span class="ms" style="left:643.72px;top:372.65px;height:15px;line-height:15px;transform:scaleX(0.8833);">Unused29</span>
<div style="left:626px;top:389px;width:13px;height:13px;background:#fff;border:1px solid #333333;box-sizing:border-box;"></div>
<span class="ms" style="left:643.72px;top:387.65px;height:15px;line-height:15px;transform:scaleX(0.8833);">Unused30</span>
<div style="left:626px;top:404px;width:13px;height:13px;background:#fff;border:1px solid #333333;box-sizing:border-box;"></div>
<span class="ms" style="left:643.72px;top:402.65px;height:15px;line-height:15px;transform:scaleX(0.8833);">Unused31</span>
<div style="left:626px;top:419px;width:13px;height:13px;background:#fff;border:1px solid #333333;box-sizing:border-box;"></div>
<span class="ms" style="left:643.72px;top:417.65px;height:15px;line-height:15px;transform:scaleX(0.8833);">Unused32</span>
</div></body></html>
